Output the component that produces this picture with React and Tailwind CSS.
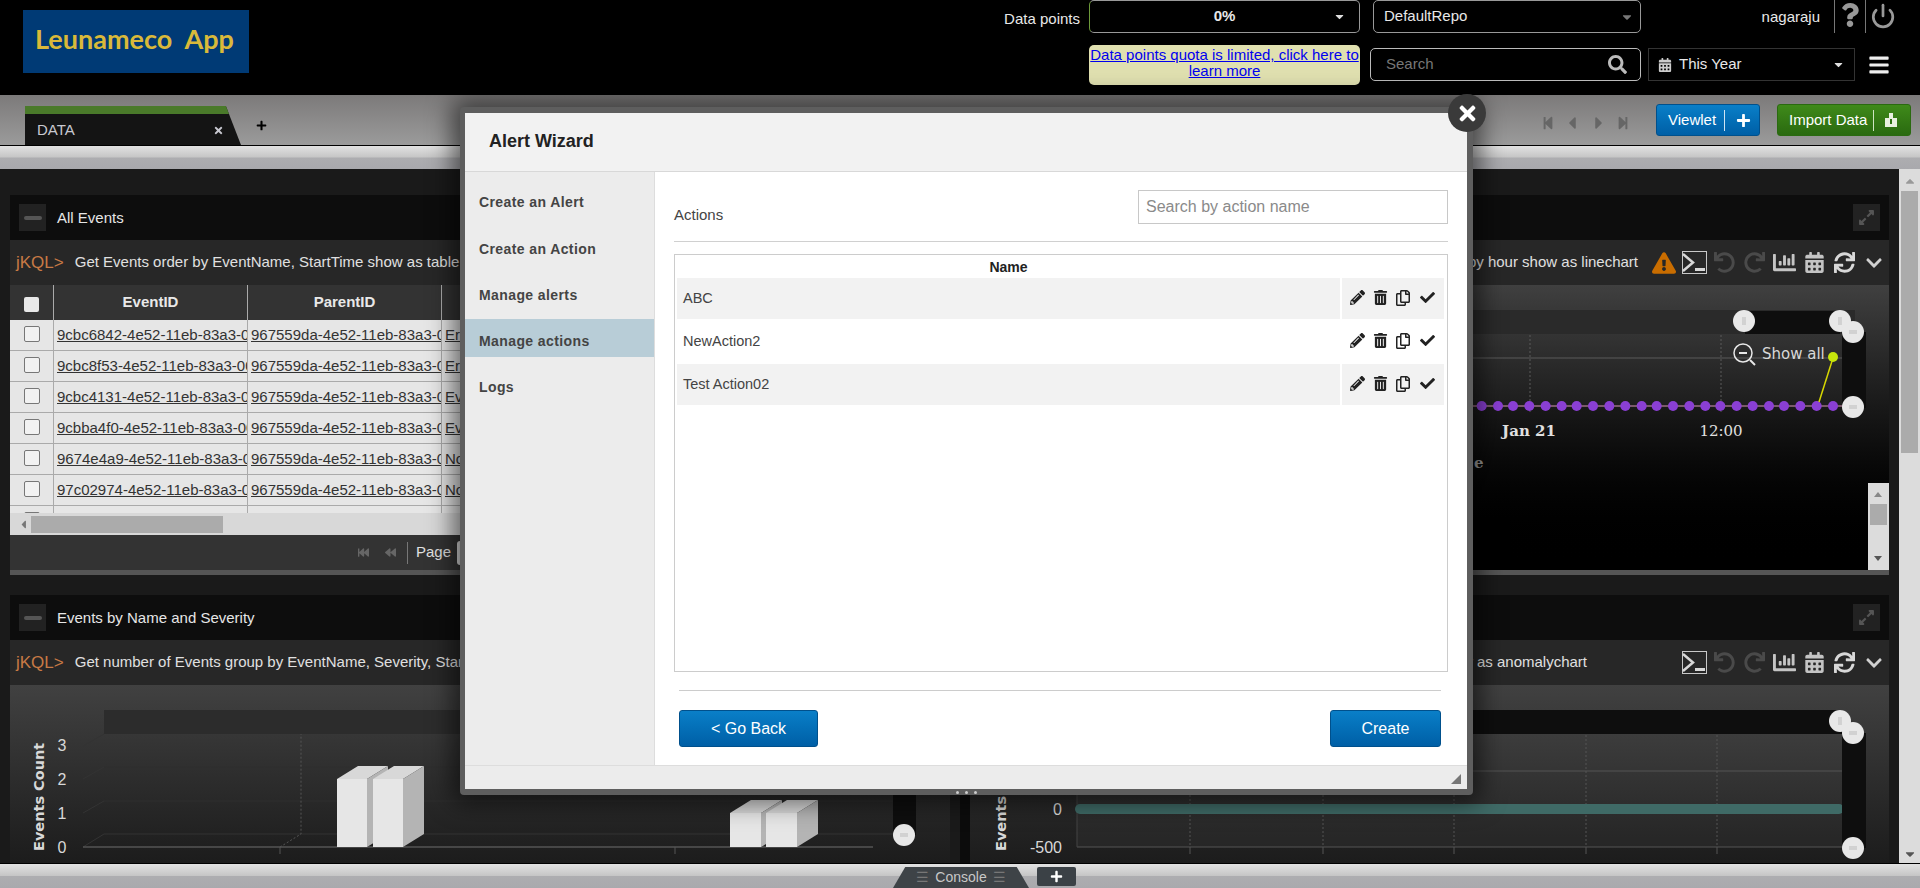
import { Power } from "lucide-react";
import { FaBars, FaCalendarAlt, FaCaretDown, FaChartBar, FaCheck, FaChevronDown, FaExclamationTriangle, FaPencilAlt, FaPlus, FaQuestion, FaRedo, FaRegCopy, FaSearch, FaStepBackward, FaStepForward, FaCaretLeft, FaCaretRight, FaSync, FaTimes, FaTrashAlt, FaUndo, FaFastBackward, FaBackward, FaCaretUp, FaExpandAlt } from "react-icons/fa";

const rows = [
  ["9cbc6842-4e52-11eb-83a3-0050", "Error Event"],
  ["9cbc8f53-4e52-11eb-83a3-0050", "Error Event"],
  ["9cbc4131-4e52-11eb-83a3-0050", "Event Started"],
  ["9cbba4f0-4e52-11eb-83a3-0050", "Event Started"],
  ["9674e4a9-4e52-11eb-83a3-0050", "Normal"],
  ["97c02974-4e52-11eb-83a3-0050", "Normal"],
  ["97c02975-4e52-11eb-83a3-0050", "Normal"],
];

const actions = [
  { name: "ABC", h: "h-[41px]", bg: "bg-[#f2f2f2]" },
  { name: "NewAction2", h: "h-[45px]", bg: "bg-white" },
  { name: "Test Action02", h: "h-[41px]", bg: "bg-[#f2f2f2]" },
];

const dots = [125, 174, 219, 268, 317, 365, 410, 459, 508, 556, 605, 650, 699, 748, 796, 841, 890, 938, 987, 1032, 1081, 1130, 1179];

function Terminal() {
  return (
    <svg width="25" height="23" viewBox="0 0 25 23">
      <rect x="0.5" y="0.5" width="24" height="22" fill="none" stroke="#c8c8c8" />
      <path d="M1 3l10 8.500l-10 8.500" fill="none" stroke="#d8d8d8" strokeWidth="2.500" />
      <rect x="13" y="17" width="10" height="3" fill="#d8d8d8" />
    </svg>
  );
}

function Toolbar({ warn }) {
  return (
    <div className={warn ? "flex items-center shrink-0 ml-[12px]" : "flex items-center shrink-0 ml-[95px]"}>
      {warn && (
        <div className="w-[27px] mr-[5px] flex justify-center">
          <FaExclamationTriangle className="text-[#c96d00] text-[24px]" />
        </div>
      )}
      <Terminal />
      <div className="ml-[2px] w-[30px] flex justify-center"><FaUndo className="text-[#4a4a4a] text-[21px]" /></div>
      <div className="w-[30px] flex justify-center"><FaRedo className="text-[#4a4a4a] text-[21px]" /></div>
      <div className="w-[30px] flex justify-center"><FaChartBar className="text-[#c4c4c4] text-[23px]" /></div>
      <div className="w-[30px] flex justify-center"><FaCalendarAlt className="text-[#c4c4c4] text-[21px]" /></div>
      <div className="w-[30px] flex justify-center"><FaSync className="text-[#d8d8d8] text-[21px]" /></div>
      <div className="w-[30px] flex justify-center"><FaChevronDown className="text-[#d0d0d0] text-[18px]" /></div>
    </div>
  );
}

function PanelHead({ title, expand }) {
  return (
    <div className="h-[45px] bg-[#0d0d0d] flex items-center pl-[9px] pr-[9px]">
      <div className="w-[27px] h-[27px] bg-[#222222] flex items-center justify-center">
        <div className="w-[18px] h-[4px] rounded-[2px] bg-[#555555]" />
      </div>
      <span className="ml-[11px] pt-[2px] text-[15px] text-[#e6e6e6]">{title}</span>
      {expand && (
        <div className="ml-auto w-[27px] h-[27px] bg-[#222222] flex items-center justify-center">
          <FaExpandAlt className="text-[#555555] text-[17px]" />
        </div>
      )}
    </div>
  );
}

function QueryBar({ children, right }) {
  return (
    <div className="h-[45px] bg-[#272727] flex items-center pl-[6px] overflow-hidden">
      {!right && <span className="text-[17px] text-[#c87a45] whitespace-nowrap">jKQL&gt;</span>}
      <span className={right ? "ml-auto text-[15px] text-[#e0e0e0] whitespace-nowrap" : "ml-[11px] text-[15px] text-[#e0e0e0] whitespace-nowrap"}>{children}</span>
      {right}
    </div>
  );
}

function EventsTable() {
  return (
    <div>
      <div className="h-[35px] bg-[#333333] flex text-[15px] font-bold text-[#e8e8e8]">
        <div className="w-[43px] flex items-center justify-center">
          <div className="w-[15px] h-[15px] mt-[3px] rounded-[2px] bg-[#e8e8e8]" />
        </div>
        <div className="w-[194px] border-l border-[#aaaaaa] text-center pt-[6px]">EventID</div>
        <div className="w-[194px] border-l border-[#aaaaaa] text-center pt-[6px]">ParentID</div>
        <div className="flex-1 border-l border-[#aaaaaa] text-center pt-[6px]">EventName</div>
      </div>
      <div className="h-[193px] overflow-hidden bg-[#e6e6e6]">
        {rows.map((r) => (
          <div key={r[0]} className="h-[31px] flex border-b border-[#aaaaaa] text-[15px] text-[#333333] underline">
            <div className="w-[43px] flex items-center justify-center">
              <div className="w-[16px] h-[16px] -mt-[2px] rounded-[2px] border border-[#777777] bg-[#f2f2f2]" />
            </div>
            <div className="w-[194px] border-l border-[#aaaaaa] pl-[3px] pt-[4px] overflow-hidden whitespace-nowrap">{r[0]}</div>
            <div className="w-[194px] border-l border-[#aaaaaa] pl-[3px] pt-[4px] overflow-hidden whitespace-nowrap">967559da-4e52-11eb-83a3-0050</div>
            <div className="flex-1 border-l border-[#aaaaaa] pl-[3px] pt-[4px] overflow-hidden whitespace-nowrap">{r[1]}</div>
          </div>
        ))}
      </div>
      <div className="h-[22px] bg-[#d8d8d8] flex items-center pl-[7px]">
        <FaCaretLeft className="text-[#777777] text-[13px]" />
        <div className="ml-[1px] w-[192px] h-[17px] bg-[#ababab]" />
      </div>
      <div className="h-[35px] bg-[#333333] flex items-center pl-[348px] text-[#666666]">
        <FaFastBackward className="text-[11px]" />
        <FaBackward className="text-[11px] ml-[16px]" />
        <div className="ml-[11px] h-[22px] border-l border-[#777777]" />
        <span className="ml-[8px] text-[15px] text-[#e0e0e0]">Page</span>
        <div className="ml-[6px] w-[40px] h-[24px] rounded-[3px] bg-[#dddddd]" />
      </div>
    </div>
  );
}

function LineChart() {
  return (
    <div className="h-[285px] bg-gradient-to-b from-[#404040] to-[#000000]">
      <svg width="929" height="285" viewBox="960 285 929 285" className="block">
        <rect x="960" y="310" width="895" height="24" fill="#2a2a2a" />
        <rect x="1745" y="311" width="95" height="23" fill="#0e0e0e" />
        <rect x="960" y="334" width="882" height="72" fill="#ffffff" fillOpacity="0.02" />
        <line x1="960" y1="358" x2="1842" y2="358" stroke="#5a5a5a" />
        <line x1="1530" y1="335" x2="1530" y2="412" stroke="#5a5a5a" strokeDasharray="2 2" />
        <line x1="1721" y1="335" x2="1721" y2="412" stroke="#5a5a5a" strokeDasharray="2 2" />
        <line x1="960" y1="406" x2="1842" y2="406" stroke="#7a5a6a" strokeWidth="2" />
        {dots.map((d) => (
          <circle key={d} cx={1440 + d / 3} cy="406" r="5" fill="#8a3fd4" />
        ))}
        <line x1="1819" y1="402" x2="1833" y2="358" stroke="#d8d800" strokeWidth="1.500" />
        <circle cx="1833" cy="357" r="5" fill="#c6e60c" />
        <rect x="1842" y="332" width="24" height="76" fill="#0e0e0e" />
        <circle cx="1744" cy="321" r="11" fill="#e8e8e8" />
        <circle cx="1840" cy="321" r="11" fill="#e8e8e8" />
        <circle cx="1853" cy="332" r="11" fill="#e8e8e8" />
        <circle cx="1853" cy="407" r="11" fill="#e8e8e8" />
        <path d="M1743 317v8M1745 317v8M1839 317v8M1841 317v8M1849 331h8M1849 333h8M1849 406h8M1849 408h8" stroke="#bbbbbb" />
        <circle cx="1743" cy="353" r="9" fill="none" stroke="#e8e8e8" strokeWidth="1.500" />
        <path d="M1739 353h8" stroke="#e8e8e8" strokeWidth="2" />
        <path d="M1750 360l5 5" stroke="#e8e8e8" strokeWidth="2" />
        <text x="1762" y="359" fontFamily="DejaVu Sans" fontSize="15" fill="#d8d8d8">Show all</text>
        <text x="1529" y="436" fontFamily="DejaVu Serif" fontSize="15" fontWeight="700" textAnchor="middle" fill="#e0e0e0">Jan 21</text>
        <text x="1721" y="436" fontFamily="DejaVu Serif" fontSize="15" textAnchor="middle" fill="#e0e0e0">12:00</text>
        <text x="1474" y="468" fontFamily="DejaVu Serif" fontSize="15" fontWeight="700" fill="#999999">e</text>
        <rect x="1868" y="483" width="21" height="87" fill="#dcdcdc" />
        <path d="M1874 497l4-5l4 5z" fill="#888888" />
        <rect x="1870" y="504" width="17" height="21" fill="#ababab" />
        <path d="M1874 556l4 5l4-5z" fill="#555555" />
      </svg>
    </div>
  );
}

function BarChart() {
  const bar = (x, y, w, d) => (
    <g key={x}>
      <path d={`M${x} ${y}l${d} -13h${w}l-${d} 13z`} fill="#d8d8d8" />
      <path d={`M${x + w} ${y}l${d} -13V${834}l-${d} 13z`} fill="#b4b4b4" />
      <rect x={x} y={y} width={w} height={847 - y} fill="#e6e6e6" />
    </g>
  );
  return (
    <div className="h-[178px] bg-gradient-to-b from-[#414141] to-[#1c1c1c]">
      <svg width="940" height="178" viewBox="10 685 940 178" className="block">
        <rect x="104" y="710" width="800" height="24" fill="#2c2c2c" />
        <path d="M83 746l21-12M83 779l21-12M83 813l21-12M83 847l21-13h790" fill="none" stroke="#333333" />
        <path d="M104 767h790M104 801h790" stroke="#2e2e2e" />
        <path d="M280 847l21-13V734" fill="none" stroke="#555555" strokeDasharray="2 2" />
        <line x1="83" y1="847" x2="873" y2="847" stroke="#555555" strokeWidth="1.500" />
        <line x1="280" y1="847" x2="280" y2="854" stroke="#555555" />
        <line x1="675" y1="847" x2="675" y2="854" stroke="#555555" />
        {bar(337, 779, 30, 21)}
        {bar(373, 779, 30, 21)}
        {bar(730, 813, 31, 21)}
        {bar(766, 813, 31, 21)}
        <rect x="893" y="735" width="23" height="100" fill="#0e0e0e" />
        <circle cx="904" cy="835" r="11" fill="#e8e8e8" />
        <path d="M900 834h8M900 836h8" stroke="#bbbbbb" />
        <text transform="translate(44 851) rotate(-90)" fontFamily="DejaVu Sans" fontWeight="700" fontSize="14.5" fill="#d8d8d8">Events Count</text>
        {[["3", 751], ["2", 785], ["1", 819], ["0", 853]].map((t) => (
          <text key={t[0]} x="62" y={t[1]} fontFamily="Liberation Sans" fontSize="16" textAnchor="middle" fill="#d8d8d8">{t[0]}</text>
        ))}
      </svg>
    </div>
  );
}

function AnomalyChart() {
  return (
    <div className="h-[178px] bg-gradient-to-b from-[#414141] to-[#1c1c1c]">
      <svg width="929" height="178" viewBox="960 685 929 178" className="block">
        <rect x="960" y="685" width="10" height="178" fill="#0c0c0c" />
        <rect x="1030" y="710" width="812" height="24" fill="#0e0e0e" />
        <rect x="1077" y="734" width="765" height="113" fill="#ffffff" fillOpacity="0.03" />
        <line x1="1077" y1="771" x2="1842" y2="771" stroke="#555555" />
        <line x1="1077" y1="847" x2="1842" y2="847" stroke="#555555" />
        <line x1="1077" y1="734" x2="1077" y2="847" stroke="#444444" />
        {[1190, 1323, 1454, 1586, 1717].map((x) => (
          <g key={x}>
            <line x1={x} y1="735" x2={x} y2="847" stroke="#555555" strokeDasharray="2 2" />
            <line x1={x} y1="847" x2={x} y2="854" stroke="#555555" />
          </g>
        ))}
        <rect x="1075" y="804" width="769" height="10" rx="5" fill="#3f6a66" />
        <rect x="1842" y="733" width="24" height="115" fill="#0e0e0e" />
        <circle cx="1840" cy="721" r="11" fill="#e8e8e8" />
        <circle cx="1853" cy="733" r="11" fill="#e8e8e8" />
        <circle cx="1853" cy="848" r="11" fill="#e8e8e8" />
        <path d="M1839 717v8M1841 717v8M1849 732h8M1849 734h8M1849 847h8M1849 849h8" stroke="#bbbbbb" />
        <text transform="translate(1006 851) rotate(-90)" fontFamily="DejaVu Sans" fontWeight="700" fontSize="14.5" fill="#d8d8d8">Events Count</text>
        <text x="1062" y="815" fontFamily="Liberation Sans" fontSize="16" textAnchor="end" fill="#d8d8d8">0</text>
        <text x="1062" y="853" fontFamily="Liberation Sans" fontSize="16" textAnchor="end" fill="#d8d8d8">-500</text>
      </svg>
    </div>
  );
}

function Modal() {
  return (
    <div className="absolute left-[460px] top-[107px] w-[1013px] h-[688px] border-t-[6px] border-b-[6px] border-l-[5px] border-r-[6px] border-[#5e5e5e] rounded-[4px] bg-white shadow-[0_0_24px_8px_rgba(0,0,0,0.55)] flex flex-col">
      <div className="h-[59px] shrink-0 bg-[#f2f2f2] border-b border-[#d8d8d8] flex items-center pl-[24px] pb-[2px] text-[18px] font-bold text-[#222222]">Alert Wizard</div>
      <div className="flex-1 flex min-h-0">
        <div className="w-[190px] shrink-0 bg-[#ececec] border-r border-[#dddddd] pt-[11px] flex flex-col gap-[8px] text-[14px] font-bold text-[#444444] tracking-[0.4px]">
          <div className="h-[38px] flex items-center pl-[14px]">Create an Alert</div>
          <div className="h-[38px] flex items-center pl-[14px] pt-[2px]">Create an Action</div>
          <div className="h-[38px] flex items-center pl-[14px] pt-[2px]">Manage alerts</div>
          <div className="h-[38px] -mt-[2px] flex items-center pl-[14px] pt-[6px] bg-[#b8cdd7]">Manage actions</div>
          <div className="h-[38px] flex items-center pl-[14px] pt-[6px]">Logs</div>
        </div>
        <div className="flex-1 pl-[19px] pr-[19px] pt-[18px] min-w-0">
          <div className="flex items-end justify-between h-[34px]">
            <span className="text-[15px] text-[#444444] -mb-[2px]">Actions</span>
            <div className="w-[310px] h-[34px] border border-[#c8c8c8] flex items-center pl-[7px] text-[16px] text-[#8a8a8a]">Search by action name</div>
          </div>
          <div className="mt-[17px] border-t border-[#d0d0d0]" />
          <div className="mt-[12px] h-[418px] border border-[#cccccc] px-[2px]">
            <div className="h-[23px] flex text-[14px] font-bold text-[#222222]">
              <div className="w-[663px] text-center pt-[2px]">Name</div>
            </div>
            {actions.map((a) => (
              <div key={a.name} className={`flex ${a.h} text-[14.5px] text-[#444444]`}>
                <div className={`w-[663px] ${a.bg} flex items-center pl-[6px] pt-[1px]`}>{a.name}</div>
                <div className={`ml-[2px] w-[102px] ${a.bg} flex items-center text-[#222222] pl-[8px] pb-[2px]`}>
                  <FaPencilAlt className="text-[15px]" />
                  <FaTrashAlt className="text-[15px] ml-[8px]" />
                  <FaRegCopy className="text-[16px] ml-[7px]" />
                  <FaCheck className="text-[15px] ml-[9px]" />
                </div>
              </div>
            ))}
          </div>
          <div className="mt-[18px] ml-[5px] mr-[7px] border-t border-[#cccccc]" />
          <div className="mt-[19px] ml-[5px] mr-[7px] flex justify-between">
            <button className="w-[139px] h-[37px] rounded-[3px] border border-[#00508c] bg-gradient-to-b from-[#0a7fc8] to-[#005fa6] text-[16px] text-white">&lt; Go Back</button>
            <button className="w-[111px] h-[37px] rounded-[3px] border border-[#00508c] bg-gradient-to-b from-[#0a7fc8] to-[#005fa6] text-[16px] text-white">Create</button>
          </div>
        </div>
      </div>
      <div className="h-[24px] shrink-0 bg-[#ececec] border-t border-[#dddddd] flex justify-end items-end pr-[6px] pb-[5px]">
        <svg width="10" height="10" viewBox="0 0 10 10">
          <path d="M10 0v10H0z" fill="#777777" />
        </svg>
      </div>
      <div className="absolute left-[491px] -bottom-[5px] w-[21px] flex justify-between">
        <span className="w-[3px] h-[3px] rounded-full bg-[#cccccc]" />
        <span className="w-[3px] h-[3px] rounded-full bg-[#cccccc]" />
        <span className="w-[3px] h-[3px] rounded-full bg-[#cccccc]" />
      </div>
      <div className="absolute -right-[19px] -top-[19px] w-[38px] h-[38px] rounded-full bg-[#3a3a3a] flex items-center justify-center">
        <FaTimes className="text-white text-[23px]" />
      </div>
    </div>
  );
}

export default function App() {
  return (
    <div className="relative w-[1920px] h-[888px] overflow-hidden bg-[#1a1a1a] font-['Liberation_Sans',sans-serif] flex flex-col">
      {/* top header */}
      <div className="h-[95px] shrink-0 bg-black flex text-[15px] text-[#e8e8e8]">
        <div className="ml-[23px] mt-[10px] w-[226px] h-[63px] bg-[#003a75] flex items-center pl-[12px] pb-[4px] font-['Lato',sans-serif] text-[27px] font-bold text-[#d9b93a] whitespace-pre">Leunameco  App</div>
        <div className="ml-[751px] w-[80px] pt-[8px] text-right whitespace-nowrap">
          <span>Data points</span>
        </div>
        <div className="ml-[9px] w-[271px]">
          <div className="h-[33px] rounded-[5px] border border-[#999999] border-l-[#6d9a3a] flex items-center font-bold relative">
            <span className="flex-1 text-center">0%</span>
            <FaCaretDown className="absolute right-[13px] text-[#dddddd] text-[13px]" />
          </div>
          <div className="mt-[12px] h-[40px] rounded-[5px] bg-[#e0e0b0] text-center leading-[16px] pt-[2px] text-[#0000ee] underline">Data points quota is limited, click here to learn more</div>
        </div>
        <div className="ml-[10px] w-[271px]">
          <div className="ml-[3px] w-[268px] h-[33px] rounded-[5px] border border-[#999999] flex items-center pl-[10px] relative">
            <span>DefaultRepo</span>
            <FaCaretDown className="absolute right-[6px] text-[#777777] text-[14px]" />
          </div>
          <div className="mt-[15px] h-[33px] rounded-[5px] border border-[#bbbbbb] flex items-center pl-[15px] text-[#777777] relative">
            <span>Search</span>
            <FaSearch className="absolute right-[13px] text-[#bbbbbb] text-[19px]" />
          </div>
        </div>
        <div className="ml-[7px] flex-1 relative">
          <div className="flex justify-end items-start pr-[20px] h-[33px]">
            <span className="mt-[6px] mr-[14px]">nagaraju</span>
            <div className="h-[33px] w-[31px] border-l border-[#777777] flex justify-center pt-[3px]"><FaQuestion className="text-[#999999] text-[24px]" /></div>
            <div className="h-[33px] w-[35px] border-l border-[#777777] flex justify-center pt-[3px]"><Power className="text-[#999999]" size={26} strokeWidth={2.5} /></div>
          </div>
          <div className="mt-[15px] flex items-center">
            <div className="w-[207px] h-[33px] border border-[#333333] flex items-center pl-[9px] relative">
              <FaCalendarAlt className="text-[#cccccc] text-[14px]" />
              <span className="ml-[7px]">This Year</span>
              <FaCaretDown className="absolute right-[9px] text-[#dddddd] text-[13px]" />
            </div>
            <FaBars className="ml-[13px] text-[#eeeeee] text-[22px]" />
          </div>
        </div>
      </div>

      {/* tab strip */}
      <div className="h-[51px] shrink-0 bg-gradient-to-b from-[#7c7a7a] to-[#9b9b9b] border-b border-black flex relative">
        <div className="ml-[25px] mt-[11px] w-[216px] h-[39px] bg-[#141414] [clip-path:polygon(0_0,93%_0,100%_100%,0_100%)] border-t-[8px] border-[#4a7a2a] flex items-center pl-[12px] pt-[2px] text-[15px] text-[#c8c8d0]">
          <span>DATA</span>
          <FaTimes className="ml-[138px] shrink-0 text-[#c8c8d0] text-[11px]" />
        </div>
        <FaPlus className="ml-[15px] mt-[25px] text-black text-[11px]" />
        <div className="ml-auto flex items-start pr-[9px]">
          <div className="flex items-center mt-[18px] text-[#666666] text-[17px]">
            <FaStepBackward className="text-[14px]" />
            <FaCaretLeft className="ml-[7px] text-[20px]" />
            <FaCaretRight className="ml-[7px] text-[20px]" />
            <FaStepForward className="ml-[7px] text-[14px]" />
          </div>
          <div className="ml-[26px] mt-[9px] w-[104px] h-[32px] rounded-[3px] border border-[#00508c] bg-gradient-to-b from-[#0a7fc8] to-[#005fa6] flex items-center text-[15px] text-white pl-[11px]">
            <span>Viewlet</span>
            <div className="ml-[8px] h-[21px] border-l border-[#cfe4f3]" />
            <FaPlus className="ml-[11px] text-[15px]" />
          </div>
          <div className="ml-[17px] mt-[9px] w-[134px] h-[32px] rounded-[3px] border border-[#2a6a10] bg-gradient-to-b from-[#3f8a1a] to-[#2a6a10] flex items-center text-[15px] text-white pl-[11px]">
            <span className="whitespace-nowrap">Import Data</span>
            <div className="ml-[6px] h-[21px] border-l border-[#cfe4c3]" />
            <svg width="12" height="14" viewBox="0 0 12 14" className="ml-[11px]">
              <path d="M0 5h4V0h4v5h4v9H0z" fill="#e8f0e0" />
              <path d="M5 6h2v5H5z" fill="#2f7314" />
            </svg>
          </div>
        </div>
      </div>
      <div className="h-[23px] shrink-0 bg-[linear-gradient(#e2e2e2_0%,#c6c6c6_48%,#adadb0_52%,#a9a9ad_100%)]" />

      {/* panels + page scrollbar */}
      <div className="flex-1 min-h-0 flex">
        <div className="flex-1 min-w-0 pl-[10px] pr-[10px] pt-[26px] flex flex-col gap-[20px] overflow-hidden">
          <div className="h-[380px] shrink-0 flex gap-[10px]">
            <div className="w-[940px] shrink-0 overflow-hidden">
              <PanelHead title="All Events" />
              <QueryBar>Get Events order by EventName, StartTime show as table</QueryBar>
              <EventsTable />
              <div className="h-[5px] bg-[#555555]" />
            </div>
            <div className="flex-1 min-w-0 overflow-hidden">
              <PanelHead title="Events over time" expand />
              <QueryBar right={<Toolbar warn />}>Get number of Events group by Severity by hour show as linechart</QueryBar>
              <LineChart />
              <div className="h-[5px] bg-[#555555]" />
            </div>
          </div>
          <div className="h-[268px] shrink-0 flex gap-[10px]">
            <div className="w-[940px] shrink-0 overflow-hidden">
              <PanelHead title="Events by Name and Severity" />
              <QueryBar>Get number of Events group by EventName, Severity, StartTime show as barchart</QueryBar>
              <BarChart />
            </div>
            <div className="flex-1 min-w-0 overflow-hidden">
              <PanelHead title="Events anomaly" expand />
              <QueryBar right={<Toolbar />}>Get number of Events group by hour show as anomalychart</QueryBar>
              <AnomalyChart />
            </div>
          </div>
        </div>
        <div className="w-[21px] shrink-0 bg-[#dcdcdc] flex flex-col items-center pt-[5px]">
          <FaCaretUp className="text-[#999999] text-[14px]" />
          <div className="mt-[3px] w-[17px] h-[262px] bg-[#ababab]" />
          <FaCaretDown className="mt-auto mb-[2px] text-[#555555] text-[14px]" />
        </div>
      </div>

      {/* bottom strip */}
      <div className="h-[25px] shrink-0 border-t border-black bg-[linear-gradient(#e2e2e2_0%,#c6c6c6_48%,#adadb0_52%,#a9a9ad_100%)] flex items-end pl-[893px]">
        <div className="w-[136px] h-[21px] bg-[#3e4347] [clip-path:polygon(9%_0,91%_0,100%_100%,0_100%)] flex items-center justify-center text-[14px] text-[#c8c8c8]">
          <span className="text-[#777777] mr-[6px]">☰</span>Console<span className="text-[#777777] ml-[6px]">☰</span>
        </div>
        <div className="ml-[8px] mb-[2px] w-[39px] h-[19px] rounded-[2px] bg-[#3b4146] flex items-center justify-center">
          <FaPlus className="text-white text-[13px]" />
        </div>
      </div>

      <Modal />
    </div>
  );
}
